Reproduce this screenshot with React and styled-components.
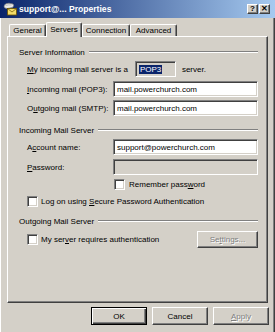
import React from 'react';
import styled, { createGlobalStyle, css } from 'styled-components';

const Global = createGlobalStyle`
  html, body { margin: 0; padding: 0; background: #d4d0c8; }
  body { font-family: 'Liberation Sans', Arial, sans-serif; font-size: 8px; color: #000; }
`;

const Window = styled.div`
  width: 275px;
  height: 332px;
  overflow: hidden;
  background: #d4d0c8;
  display: flex;
  flex-direction: column;
`;

const TitleBar = styled.div`
  height: 18px;
  flex: none;
  display: flex;
  align-items: center;
  padding: 0 5px 0 3px;
  background: linear-gradient(to right, #0a246a, #a6caf0);
  color: #fff;
  font-weight: bold;
  font-size: 8.6px;
`;

const TitleText = styled.span`
  margin-left: 2px;
  flex: 1;
  white-space: nowrap;
`;

const TitleBtn = styled.div`
  box-sizing: border-box;
  width: 11px;
  height: 10px;
  margin-left: ${p => p.$gap}px;
  background: #d4d0c8;
  border: 1px solid;
  border-color: #fff #404040 #404040 #fff;
  box-shadow: inset -1px -1px #808080;
  display: flex;
  align-items: center;
  justify-content: center;
  color: #000;
  font-size: 8px;
  font-weight: bold;
  line-height: 1;
`;

const Body = styled.div`
  flex: 1;
  display: flex;
  flex-direction: column;
  padding: 4px 7px 0 7px;
  box-shadow: inset 1px 0 #fff, inset -1px 0 #404040, inset -2px 0 #808080;
`;

const TabStrip = styled.div`
  display: flex;
  align-items: flex-end;
  height: 14px;
  padding-left: 2px;
  position: relative;
  z-index: 1;
`;

const Tab = styled.div`
  box-sizing: border-box;
  width: ${p => p.$w}px;
  height: ${p => (p.$active ? 15 : 12)}px;
  margin-bottom: ${p => (p.$active ? -1 : 0)}px;
  background: #d4d0c8;
  border-top: 1px solid #fff;
  border-left: 1px solid #fff;
  border-right: 1px solid #404040;
  border-top-left-radius: 2px;
  border-top-right-radius: 2px;
  box-shadow: inset -1px 0 #808080;
  display: flex;
  align-items: ${p => (p.$active ? 'flex-start' : 'center')};
  padding-top: ${p => (p.$active ? 2 : 0)}px;
  justify-content: center;
  white-space: nowrap;
`;

const Panel = styled.div`
  box-sizing: border-box;
  height: 267px;
  border: 1px solid;
  border-color: #fff #404040 #404040 #fff;
  box-shadow: inset -1px -1px #808080;
  padding: 9px 9px 0 11px;
  display: flex;
  flex-direction: column;
`;

const GroupHeader = styled.div`
  display: flex;
  align-items: center;
  height: 12px;
  margin-top: ${p => p.$mt || 0}px;
  white-space: nowrap;
  &::after {
    content: '';
    flex: 1;
    height: 0;
    margin-left: 4px;
    border-top: 1px solid #808080;
    border-bottom: 1px solid #fff;
  }
`;

const FieldRow = styled.div`
  display: flex;
  align-items: center;
  height: ${p => p.$h || 16}px;
  margin-top: ${p => p.$mt || 0}px;
  padding-left: ${p => (p.$indent ?? 8)}px;
  white-space: nowrap;
`;

const FieldLabel = styled.span`
  width: ${p => p.$w || 86}px;
  flex: none;
`;

const sunken = css`
  box-sizing: border-box;
  border: 1px solid;
  border-color: #808080 #fff #fff #808080;
  box-shadow: inset 1px 1px #404040, inset -1px -1px #d4d0c8;
`;

const TextBox = styled.div`
  ${sunken};
  width: 145px;
  height: 16px;
  background: ${p => (p.$disabled ? '#d4d0c8' : '#fff')};
  display: flex;
  align-items: center;
  padding-left: 3px;
`;

const ReadBox = styled.div`
  ${sunken};
  width: 41px;
  height: 16px;
  background: #d4d0c8;
  display: flex;
  align-items: center;
  padding-left: 3px;
  margin-left: 7px;
`;

const Selected = styled.span`
  background: #0a246a;
  color: #fff;
  padding: 0 1px;
`;

const Check = styled.div`
  ${sunken};
  width: 11px;
  height: 11px;
  background: #fff;
  flex: none;
  margin-right: ${p => p.$gap || 4}px;
`;

const U = styled.span`
  text-decoration: underline;
`;

const PushButton = styled.div`
  box-sizing: border-box;
  width: ${p => p.$w || 56}px;
  height: ${p => p.$h || 18}px;
  flex: none;
  display: flex;
  align-items: center;
  justify-content: center;
  background: #d4d0c8;
  border: 1px solid;
  border-color: #fff #404040 #404040 #fff;
  box-shadow: inset -1px -1px #808080;
  color: ${p => (p.$disabled ? '#808080' : '#000')};
  text-shadow: ${p => (p.$disabled ? '1px 1px #fff' : 'none')};
  margin-left: ${p => (p.$auto ? 'auto' : '0')};
  ${p =>
    p.$default &&
    css`
      border-color: #000;
      box-shadow: inset 1px 1px #fff, inset -1px -1px #404040, inset -2px -2px #808080;
    `}
`;

const ButtonRow = styled.div`
  display: flex;
  justify-content: flex-end;
  gap: 5px;
  margin-top: 4px;
  margin-right: -1px;
`;

function AccountIcon() {
  return (
    <svg width="14" height="14" viewBox="0 0 14 14">
      <path d="M1 4 Q2 1 6 1.2 L10 2 Q11.5 3.5 9.5 5.5 L4 6.5 Q1 6.5 1 4Z" fill="#ececec" stroke="#7a7a7a" strokeWidth="0.7" />
      <path d="M2.5 3.5 Q5 2.5 8.5 3" fill="none" stroke="#9a9a9a" strokeWidth="0.6" />
      <rect x="4.5" y="6.5" width="9" height="6.5" fill="#f4dc68" stroke="#6b5400" strokeWidth="0.8" />
      <path d="M4.5 6.5 L9 10 L13.5 6.5" fill="none" stroke="#6b5400" strokeWidth="0.7" />
    </svg>
  );
}

export default function App() {
  return (
    <>
      <Global />
      <Window>
        <TitleBar>
          <AccountIcon />
          <TitleText>support@... Properties</TitleText>
          <TitleBtn $gap={0}>?</TitleBtn>
          <TitleBtn $gap={1}>✕</TitleBtn>
        </TitleBar>
        <Body>
          <TabStrip>
            <Tab $w={37}>General</Tab>
            <Tab $w={36} $active>Servers</Tab>
            <Tab $w={48}>Connection</Tab>
            <Tab $w={47}>Advanced</Tab>
          </TabStrip>
          <Panel>
            <GroupHeader>Server Information</GroupHeader>
            <FieldRow $mt={3}>
              <span><U>M</U>y incoming mail server is a</span>
              <ReadBox><Selected>POP3</Selected></ReadBox>
              <span style={{ marginLeft: 6 }}>server.</span>
            </FieldRow>
            <FieldRow $mt={4}>
              <FieldLabel><U>I</U>ncoming mail (POP3):</FieldLabel>
              <TextBox>mail.powerchurch.com</TextBox>
            </FieldRow>
            <FieldRow $mt={3}>
              <FieldLabel>O<U>u</U>tgoing mail (SMTP):</FieldLabel>
              <TextBox>mail.powerchurch.com</TextBox>
            </FieldRow>
            <GroupHeader $mt={8}>Incoming Mail Server</GroupHeader>
            <FieldRow $mt={3}>
              <FieldLabel>A<U>c</U>count name:</FieldLabel>
              <TextBox>support@powerchurch.com</TextBox>
            </FieldRow>
            <FieldRow $mt={4}>
              <FieldLabel><U>P</U>assword:</FieldLabel>
              <TextBox $disabled />
            </FieldRow>
            <FieldRow $mt={4} $h={11} $indent={95}>
              <Check />
              <span>Remember pass<U>w</U>ord</span>
            </FieldRow>
            <FieldRow $mt={6} $h={11}>
              <Check $gap={3} />
              <span>Log on using <U>S</U>ecure Password Authentication</span>
            </FieldRow>
            <GroupHeader $mt={8}>Outgoing Mail Server</GroupHeader>
            <FieldRow $mt={4} $h={17}>
              <Check $gap={3} />
              <span>My ser<U>v</U>er requires authentication</span>
              <PushButton $w={61} $h={17} $auto $disabled>Se<U>t</U>tings...</PushButton>
            </FieldRow>
          </Panel>
          <ButtonRow>
            <PushButton $default>OK</PushButton>
            <PushButton>Cancel</PushButton>
            <PushButton $disabled><U>A</U>pply</PushButton>
          </ButtonRow>
        </Body>
      </Window>
    </>
  );
}
